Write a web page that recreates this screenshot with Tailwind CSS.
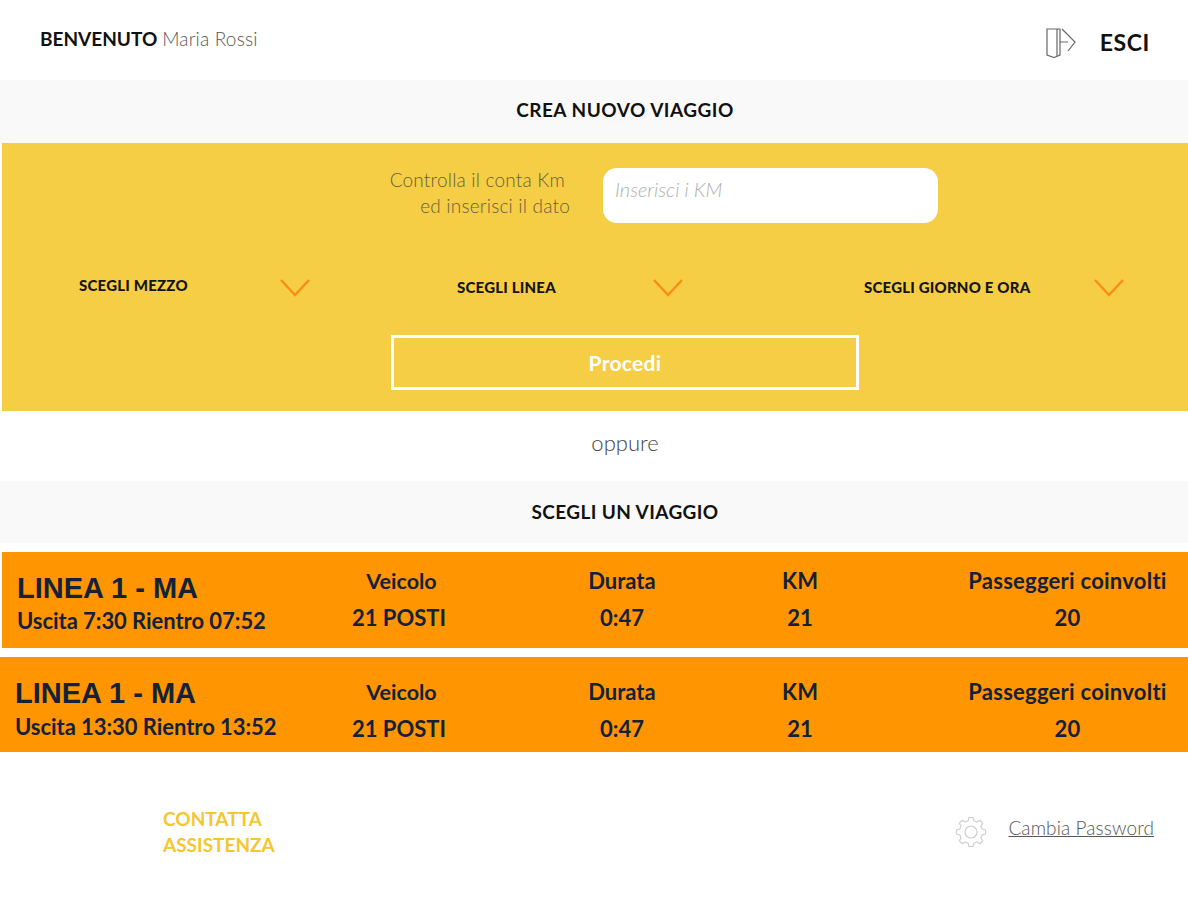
<!DOCTYPE html>
<html lang="en">
<head>
  <meta charset="UTF-8">
  <meta name="viewport" content="width=device-width, initial-scale=1">
  <title>Viaggi</title>
  <script src="https://cdn.jsdelivr.net/npm/@tailwindcss/browser@4"></script>
</head>
<body class="bg-white font-['Lato','Liberation_Sans',sans-serif] text-[#111]">

<!-- header -->
<header class="h-[80px] flex items-start justify-between pl-[40px] pr-[38px]">
  <p class="mt-[28px] text-[19px] leading-[22px]"><span class="font-bold">BENVENUTO</span> <span class="text-[#555] font-light tracking-[0.2px]">Maria Rossi</span></p>
  <div class="flex items-center mt-[26px]">
    <svg class="w-[30px] h-[32px] text-[#666]" viewBox="0 0 30 32" fill="none" stroke="currentColor" stroke-width="1.200">
      <path d="M1 3h13v26l-6 2.500-7-2.500z"/>
      <path d="M11 3v27"/>
      <path d="M14 16h8M16 3l13 13-7 9"/>
    </svg>
    <a class="ml-[24px] text-[23px] leading-[28px] font-bold tracking-[0.6px]">ESCI</a>
  </div>
</header>

<div class="h-[63px] pl-[62px] pb-[2px] bg-[#f9f9fa] flex items-center justify-center text-[19px] font-bold tracking-[0.5px]">CREA NUOVO VIAGGIO</div>

<!-- nuovo viaggio -->
<section class="ml-[2px] h-[268px] bg-[#f6ce45] pt-[25px]">
  <div class="flex">
    <p class="w-[568px] -mt-[1px] text-right text-[19px] leading-[26px] tracking-[0.2px] text-[#66603a] font-light"><span class="mr-[5px]">Controlla il conta Km</span><br>ed inserisci il dato</p>
    <div class="ml-[33px] w-[335px] h-[55px] bg-white rounded-[14px] pl-[12px] pt-[8px] text-[20px] leading-[26px] italic font-light text-[#b0b0b0]">Inserisci i KM</div>
  </div>
  <div class="flex mt-[50px] h-[24px] items-start">
    <span class="ml-[77px] w-[201px] text-[15px] leading-[24px] tracking-[0.2px] font-black text-[#151515]">SCEGLI MEZZO</span>
    <svg class="mt-[5px] w-[30px] h-[20px] text-[#fb8c14]" viewBox="0 0 30 20" fill="none" stroke="currentColor" stroke-width="2.500"><path d="M1 2l14 15L29 2"/></svg>
    <span class="ml-[147px] mt-[2px] w-[196px] text-[15px] leading-[24px] tracking-[0.2px] font-black text-[#151515]">SCEGLI LINEA</span>
    <svg class="mt-[5px] w-[30px] h-[20px] text-[#fb8c14]" viewBox="0 0 30 20" fill="none" stroke="currentColor" stroke-width="2.500"><path d="M1 2l14 15L29 2"/></svg>
    <span class="ml-[181px] mt-[2px] w-[230px] text-[15px] leading-[24px] tracking-[0.2px] font-black text-[#151515]">SCEGLI GIORNO E ORA</span>
    <svg class="mt-[5px] w-[30px] h-[20px] text-[#fb8c14]" viewBox="0 0 30 20" fill="none" stroke="currentColor" stroke-width="2.500"><path d="M1 2l14 15L29 2"/></svg>
  </div>
  <button class="block ml-[389px] mt-[38px] w-[468px] h-[55px] border-[3px] border-white text-white text-[21px] font-bold tracking-[0.3px]">Procedi</button>
</section>

<p class="h-[70px] pl-[62px] pb-[8px] flex items-center justify-center text-[22px] font-light text-[#444]">oppure</p>

<div class="h-[62px] pl-[62px] bg-[#f9f9fa] flex items-center justify-center text-[19px] font-bold tracking-[0.4px]">SCEGLI UN VIAGGIO</div>

<!-- viaggi -->
<section class="mt-[9px] text-[#14213a]">
  <div class="ml-[2px] h-[96px] bg-[#ff9500] flex">
    <div class="w-[298px] pl-[15px] pt-[19px]">
      <p class="text-[29px] leading-[34px] font-bold font-['Liberation_Sans',sans-serif]">LINEA 1 - MA</p>
      <p class="mt-[3px] text-[22px] leading-[26px] font-bold tracking-[-0.05px]">Uscita 7:30 Rientro 07:52</p>
    </div>
    <div class="w-[198px] pt-[16px] text-center text-[22px] leading-[26px] font-bold"><p class="pl-[5px] text-[21.500px]">Veicolo</p><p class="mt-[11px]">21 POSTI</p></div>
    <div class="w-[248px] pt-[16px] text-center text-[22px] leading-[26px] font-bold"><p>Durata</p><p class="mt-[11px]">0:47</p></div>
    <div class="w-[108px] pt-[16px] text-center text-[22px] leading-[26px] font-bold"><p>KM</p><p class="mt-[11px]">21</p></div>
    <div class="ml-[93px] w-[241px] pt-[16px] text-center text-[22px] leading-[26px] tracking-[0.25px] font-bold"><p>Passeggeri coinvolti</p><p class="mt-[11px]">20</p></div>
  </div>
  <div class="mt-[9px] h-[95px] bg-[#ff9500] flex">
    <div class="w-[300px] pl-[15px] pt-[19px]">
      <p class="text-[29px] leading-[34px] font-bold font-['Liberation_Sans',sans-serif]">LINEA 1 - MA</p>
      <p class="mt-[4px] text-[22px] leading-[26px] font-bold tracking-[-0.05px]">Uscita 13:30 Rientro 13:52</p>
    </div>
    <div class="w-[198px] pt-[22px] text-center text-[22px] leading-[26px] font-bold"><p class="pl-[5px] text-[21.500px]">Veicolo</p><p class="mt-[11px]">21 POSTI</p></div>
    <div class="w-[248px] pt-[22px] text-center text-[22px] leading-[26px] font-bold"><p>Durata</p><p class="mt-[11px]">0:47</p></div>
    <div class="w-[108px] pt-[22px] text-center text-[22px] leading-[26px] font-bold"><p>KM</p><p class="mt-[11px]">21</p></div>
    <div class="ml-[93px] w-[241px] pt-[22px] text-center text-[22px] leading-[26px] tracking-[0.25px] font-bold"><p>Passeggeri coinvolti</p><p class="mt-[11px]">20</p></div>
  </div>
</section>

<!-- footer -->
<footer class="flex justify-between pl-[163px] pr-[34px] pt-[54px]">
  <a class="text-[19px] leading-[26px] font-bold text-[#f6c62e]">CONTATTA<br>ASSISTENZA</a>
  <div class="flex items-start">
    <svg class="w-[32px] h-[32px] mt-[10px] text-[#cfcfcf]" viewBox="0 0 24 24" fill="none" stroke="currentColor" stroke-width="0.900" stroke-linejoin="round">
      <circle cx="12" cy="12" r="4.500"/>
      <polygon points="9.900,3.560 10.470,1.110 13.530,1.110 14.100,3.560 16.480,4.540 18.620,3.210 20.790,5.380 19.460,7.520 20.440,9.900 22.890,10.470 22.890,13.530 20.440,14.100 19.460,16.480 20.790,18.620 18.620,20.790 16.480,19.460 14.100,20.440 13.530,22.890 10.470,22.890 9.900,20.440 7.520,19.460 5.380,20.790 3.210,18.620 4.540,16.480 3.560,14.100 1.110,13.530 1.110,10.470 3.560,9.900 4.540,7.520 3.210,5.380 5.380,3.210 7.520,4.540"/>
    </svg>
    <a class="ml-[21px] mt-[9px] text-[19px] leading-[26px] tracking-[0.1px] font-light text-[#555] underline">Cambia Password</a>
  </div>
</footer>

</body>
</html>
